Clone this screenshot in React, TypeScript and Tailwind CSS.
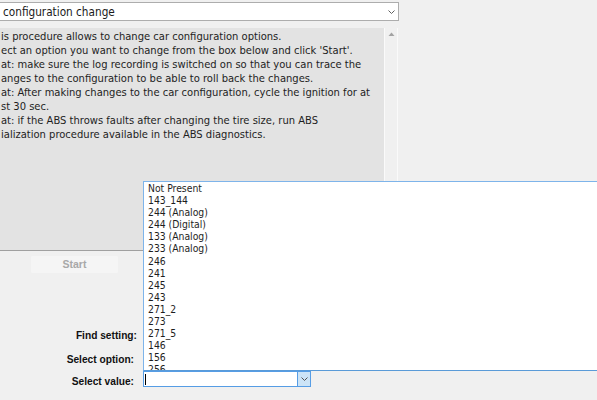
import React from "react";

const lines = [
  "is procedure allows to change car configuration options.",
  "ect an option you want to change from the box below and click 'Start'.",
  "at: make sure the log recording is switched on so that you can trace the",
  "anges to the configuration to be able to roll back the changes.",
  "at: After making changes to the car configuration, cycle the ignition for at",
  "st 30 sec.",
  "at: if the ABS throws faults after changing the tire size, run ABS",
  "ialization procedure available in the ABS diagnostics.",
];

const items = [
  "Not Present",
  "143_144",
  "244 (Analog)",
  "244 (Digital)",
  "133 (Analog)",
  "233 (Analog)",
  "246",
  "241",
  "245",
  "243",
  "271_2",
  "273",
  "271_5",
  "146",
  "156",
  "256",
];

function Chevron({ color = "#606060" }: { color?: string }) {
  return (
    <svg width="7" height="4" viewBox="0 0 7 4" className="block">
      <path d="M0.5 0.5 L3.5 3.5 L6.5 0.5" fill="none" stroke={color} strokeWidth="1" />
    </svg>
  );
}

export default function App() {
  return (
    <div className="relative w-[597px] h-[400px] overflow-hidden bg-[#f0f0f0] text-[#1e1e1e] font-['DejaVu_Sans_Condensed','DejaVu_Sans',sans-serif] text-[11px]">
      {/* top combobox */}
      <div className="pt-[2px]">
        <div className="-ml-[2px] w-[401px] h-[19px] border border-[#adadad] bg-white flex items-center justify-between">
          <span className="pl-[4px] pt-[1px] text-[11.7px] leading-[17px] text-[#1a1a1a] font-stretch-condensed">configuration change</span>
          <span className="pr-[3px]">
            <Chevron />
          </span>
        </div>
      </div>

      {/* description panel */}
      <div className="mt-[7px] w-[398px] h-[223px] flex border-b border-[#a0a0a0]">
        <div className="w-[384px] h-full bg-[#e3e3e3] pt-[2px] pl-[1px] overflow-hidden text-[11.1px]">
          {lines.map((l, i) => (
            <div key={i} className="whitespace-pre leading-[14px]">
              {l}
            </div>
          ))}
        </div>
        <div className="w-[14px] h-full bg-[#f0f0f0] border-l border-r border-[#fafafa] pt-[4px] flex justify-center">
          <svg width="7" height="5" viewBox="0 0 7 5" className="block">
            <path d="M3.5 0.5 L6.5 4 L0.5 4 Z" fill="#a3a3a3" />
          </svg>
        </div>
      </div>

      {/* start button */}
      <div className="mt-[5px] ml-[31px] w-[87px] h-[17px] bg-[#f5f5f5] rounded-[1px] flex items-center justify-center font-bold text-[#a8a8a8] text-[10.5px] font-['Liberation_Sans',Arial,sans-serif]">
        Start
      </div>

      {/* form rows */}
      <div className="mt-[56px] flex flex-col font-['Liberation_Sans',Arial,sans-serif] text-[10.2px]">
        <div className="flex h-[14px]">
          <div className="w-[137px] text-right font-bold leading-[14px] text-[#111]">Find setting:</div>
        </div>
        <div className="flex h-[14px] mt-[10px]">
          <div className="w-[134px] text-right font-bold leading-[14px] text-[#111]">Select option:</div>
        </div>
        <div className="flex mt-[4px] gap-[9px]">
          <div className="w-[134px] pt-[4px] text-right font-bold leading-[14px] text-[#111]">Select value:</div>
          <div className="w-[168px] h-[16px] border border-[#569de5] bg-white flex">
            <div className="flex-1 flex items-center pl-[1px]">
              <div className="w-[1px] h-[11px] bg-black" />
            </div>
            <div className="w-[13px] h-full bg-[#cce4f7] border-l border-[#569de5] flex items-center justify-center">
              <Chevron color="#555" />
            </div>
          </div>
        </div>
      </div>

      {/* open dropdown list */}
      <div className="absolute left-[143px] top-[181px] w-[470px] h-[190px] bg-white border border-[#7eb4ea] border-b-[#5a9bd8] overflow-hidden">
        <div className="pl-[4px] text-[10.3px]">
          {items.map((it) => (
            <div key={it} className="leading-[12.1px] h-[12.1px] whitespace-pre">
              {it}
            </div>
          ))}
        </div>
      </div>
    </div>
  );
}
